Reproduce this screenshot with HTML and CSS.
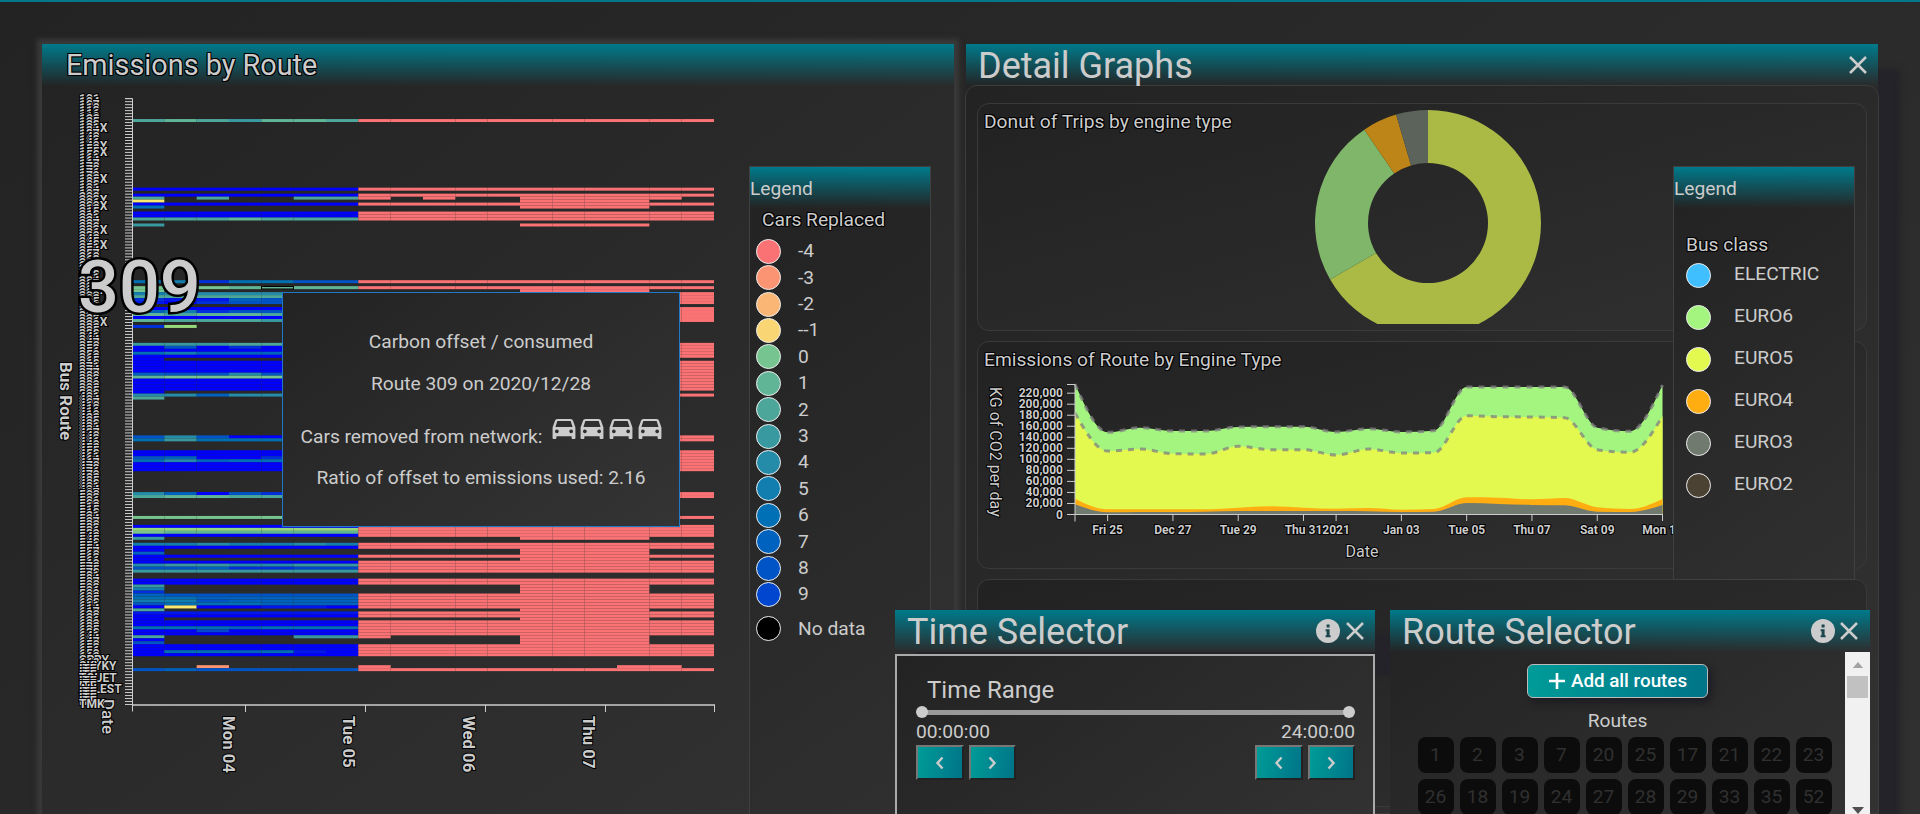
FILE: index.html
```html
<!DOCTYPE html>
<html lang="en">
<head>
<meta charset="utf-8">
<title>Emissions dashboard</title>
<link rel="stylesheet" href="styles.css">
</head>
<body>
<div class="topbar"></div>

<section class="window emissions">
  <header class="window-head"><h2 class="title outlined">Emissions by Route</h2></header>
  <svg class="heatmap" id="heatmap" width="700" height="730" viewBox="42 84 700 730"></svg>
  <aside class="legend cars">
    <header class="legend-head">Legend</header>
    <h3 class="legend-title outlined">Cars Replaced</h3>
    <ul class="legend-list" id="carsLegend"></ul>
  </aside>
  <div class="tooltip">
    <p>Carbon offset / consumed</p>
    <p>Route 309 on 2020/12/28</p>
    <p>Cars removed from network: <span class="car-icons" id="carIcons"></span></p>
    <p>Ratio of offset to emissions used: 2.16</p>
  </div>
</section>

<section class="window details">
  <header class="window-head">
    <h2 class="title large">Detail Graphs</h2>
    <svg class="close" width="18" height="18" viewBox="0 0 18 18"><path d="M1 1L17 17M17 1L1 17"/></svg>
  </header>
  <div class="details-body">
    <article class="card">
      <h3 class="card-title outlined">Donut of Trips by engine type</h3>
      <svg class="card-chart" id="donut" width="888" height="220" viewBox="978 104 888 220"></svg>
    </article>
    <article class="card">
      <h3 class="card-title outlined">Emissions of Route by Engine Type</h3>
      <svg class="card-chart" id="area" width="888" height="226" viewBox="978 342 888 226"></svg>
    </article>
    <article class="card"></article>
  </div>
  <aside class="legend bus">
    <header class="legend-head">Legend</header>
    <h3 class="legend-title outlined">Bus class</h3>
    <ul class="legend-list" id="busLegend"></ul>
  </aside>
</section>

<section class="window time">
  <header class="window-head">
    <h2 class="title large">Time Selector</h2>
    <svg class="info" width="24" height="24" viewBox="0 0 24 24"><circle cx="12" cy="12" r="12"/><path d="M10.6 5.5h3v3h-3zM9.6 10.3h4v6h1v2h-5v-2h1v-4h-1z"/></svg>
    <svg class="close" width="18" height="18" viewBox="0 0 18 18"><path d="M1 1L17 17M17 1L1 17"/></svg>
  </header>
  <div class="time-body">
    <h3 class="range-title">Time Range</h3>
    <div class="slider"><i class="thumb"></i><i class="track"></i><i class="thumb"></i></div>
    <div class="split"><span>00:00:00</span><span>24:00:00</span></div>
    <div class="split">
      <div class="steps">
        <button class="step"><svg width="10" height="16" viewBox="0 0 10 16"><path d="M7.5 2.5L2.5 8L7.5 13.5"/></svg></button>
        <button class="step"><svg width="10" height="16" viewBox="0 0 10 16"><path d="M2.5 2.5L7.5 8L2.5 13.5"/></svg></button>
      </div>
      <div class="steps">
        <button class="step"><svg width="10" height="16" viewBox="0 0 10 16"><path d="M7.5 2.5L2.5 8L7.5 13.5"/></svg></button>
        <button class="step"><svg width="10" height="16" viewBox="0 0 10 16"><path d="M2.5 2.5L7.5 8L2.5 13.5"/></svg></button>
      </div>
    </div>
  </div>
</section>

<section class="window routes">
  <header class="window-head">
    <h2 class="title large">Route Selector</h2>
    <svg class="info" width="24" height="24" viewBox="0 0 24 24"><circle cx="12" cy="12" r="12"/><path d="M10.6 5.5h3v3h-3zM9.6 10.3h4v6h1v2h-5v-2h1v-4h-1z"/></svg>
    <svg class="close" width="18" height="18" viewBox="0 0 18 18"><path d="M1 1L17 17M17 1L1 17"/></svg>
  </header>
  <div class="routes-body">
    <div class="routes-content">
      <button class="add"><svg width="18" height="18" viewBox="0 0 18 18"><path d="M9 1V17M1 9H17"/></svg>Add all routes</button>
      <h3 class="routes-title">Routes</h3>
      <div class="route-grid" id="routeGrid"></div>
    </div>
    <div class="scrollbar">
      <svg width="12" height="7" viewBox="0 0 12 7"><path d="M6 0L12 7H0z" fill="#a3a3a3"/></svg>
      <i class="scroll-thumb"></i>
      <svg class="down" width="12" height="7" viewBox="0 0 12 7"><path d="M0 0H12L6 7z" fill="#505050"/></svg>
    </div>
  </div>
</section>
<script src="main.js"></script>
</body>
</html>
```
FILE: styles.css
```css
* { box-sizing: border-box; }
html, body { height: 100%; }
body {
  margin: 0;
  overflow: hidden;
  position: relative;
  background: linear-gradient(145deg, #232323, #303030);
  color: #ccc;
  font-family: Roboto, "Liberation Sans", sans-serif;
  font-size: 19.2px;
}
h2, h3, p, ul { margin: 0; padding: 0; font-weight: 400; }
button { font-family: inherit; color: inherit; padding: 0; }
.topbar { height: 2px; background: #04788a; }
.outlined { text-shadow: -1px -1px 0 #000, 1px -1px 0 #000, -1px 1px 0 #000, 1px 1px 0 #000; }

.window { position: absolute; background: linear-gradient(145deg, #232323, #323232); }
.window-head {
  height: 42px;
  display: flex;
  align-items: center;
  background: linear-gradient(#007a8b, rgba(0, 122, 139, 0));
}
.title { font-size: 28.8px; line-height: 42px; flex: 1; }
.large { font-size: 36px; padding: 2px 0 0 12px; }
.close { fill: none; stroke: #ccc; stroke-width: 2.5; }
.info { margin-right: 6px; fill: #ccc; }
.info path { fill: #1b464c; }

.emissions { left: 42px; top: 44px; width: 912px; height: 770px; box-shadow: 0 0 5px 5px #3a3a3a; }
.emissions .title { padding-left: 24px; }
.heatmap { display: block; position: absolute; left: 0; top: 40px; }
.heatmap text, .card-chart text {
  fill: #ccc; stroke: #000; stroke-width: 2px; paint-order: stroke; font-weight: 700;
}
.heatmap .hover-label { stroke-width: 5px; font-weight: 500; }
.axis { stroke: #ccc; fill: none; }

.legend {
  position: absolute;
  top: 122px;
  width: 182px;
  border: 1px solid #404040;
  background: linear-gradient(145deg, #222, #303030);
}
.legend-head { height: 41px; line-height: 43px; background: linear-gradient(#007a8b, rgba(0, 122, 139, 0)); }
.legend-title { font-size: 19.2px; line-height: 24px; padding-left: 12px; }
.legend-list { list-style: none; }
.legend-list li { display: flex; align-items: center; }
.dot { width: 25px; height: 25px; flex: none; border-radius: 50%; border: 1px solid #eee; }
.cars { left: 707px; height: 660px; }
.cars .legend-list { padding: 6px 0 0 5.5px; }
.cars li { height: 26.42px; gap: 17.5px; }
.cars li:last-child { margin-top: 8px; }
.cars li span { margin-top: -1px; }
.bus { left: 707px; height: 414px; z-index: 2; }
.bus .legend-title { padding-top: 25px; }
.bus .legend-list { padding: 0 0 0 11.5px; margin-top: -3px; }
.bus li { height: 42px; gap: 23.5px; }
.bus li span { margin-top: -3px; }

.tooltip {
  position: absolute;
  left: 240px;
  top: 248px;
  width: 398px;
  height: 235px;
  border: 1px solid #1f78c8;
  background: linear-gradient(145deg, #232323, #343434);
  text-align: center;
  line-height: 22px;
  padding-top: 38px;
}
.tooltip p { height: 22px; margin-bottom: 20px; white-space: nowrap; }
.tooltip p:nth-child(3) { margin: 24px 0 26px; }
.car-icons svg { margin-left: 4.6px; fill: #ccc; vertical-align: 4px; }

.details { left: 966px; top: 44px; width: 912px; height: 770px; box-shadow: 22px 25px 6px #242329; }
.details .close { margin-right: 11px; }
.details-body {
  margin: -1px -1px 0;
  height: 729px;
  border: 1px solid #3c3c3c;
  border-radius: 12px 12px 0 0;
  background: linear-gradient(145deg, #232323, #323232);
  padding: 17px 11px;
  display: flex;
  flex-direction: column;
  gap: 10px;
}
.card {
  height: 228px;
  flex: none;
  border: 1px solid #3a3a3a;
  border-radius: 12px;
  background: linear-gradient(165deg, #222, #303030);
  position: relative;
}
.card-title { font-size: 19.2px; line-height: 24px; padding: 6px 0 0 6px; }
.card-chart { position: absolute; left: 0; top: 0; }

.time { left: 895px; top: 610px; width: 480px; height: 204px; z-index: 3; background: none; }
.time .window-head { background: linear-gradient(#007a8b, #2a2c2d); box-shadow: 22px 24px 4px #242329; }
.time .close { margin-right: 11px; }
.time-body {
  height: 170px;
  margin-top: 2px;
  border: 2px solid #aaa;
  background: linear-gradient(145deg, #232323, #323232);
  padding: 18px 18px 0 19px;
  position: relative;
}
.range-title { font-size: 24px; line-height: 32px; padding-left: 11px; }
.slider { display: flex; align-items: center; height: 12px; }
.thumb { width: 12px; height: 12px; border-radius: 50%; background: #ccc; z-index: 1; }
.track { flex: 1; height: 5px; margin: 0 -6px; background: #999; }
.split { display: flex; justify-content: space-between; line-height: 27px; }
.steps { display: flex; gap: 5px; }
.step {
  width: 47.5px;
  height: 35px;
  border: 2px solid;
  border-color: #777 #222 #222 #777;
  background: linear-gradient(100deg, #009c98, #007488);
}
.step svg { display: block; margin: auto; fill: none; stroke: #ccc; stroke-width: 2.4; }

.routes { left: 1390px; top: 610px; width: 480px; height: 204px; z-index: 3; }
.routes .close { margin-right: 12px; }
.routes .info { margin-right: 5px; }
.routes-body { display: flex; height: 162px; }
.routes-content { flex: 1; display: flex; flex-direction: column; align-items: center; padding-top: 12px; }
.add {
  width: 181px;
  height: 34px;
  flex: none;
  display: flex;
  align-items: center;
  justify-content: center;
  gap: 5px;
  border: 1px solid #bbb;
  border-radius: 6px;
  color: #fff;
  font-size: 18.8px;
  font-weight: 500;
  background: linear-gradient(100deg, #009c98, #007488);
  box-shadow: 3px 4px 8px #1a1a22;
}
.add svg { fill: none; stroke: #fff; stroke-width: 2.6; }
.routes-title { font-size: 19.2px; line-height: 24px; margin: 11px 0 4px; }
.route-grid { display: grid; grid-template-columns: repeat(10, 36px); gap: 6px; margin-left: 14px; }
.route {
  height: 36px;
  border-radius: 8px;
  background: #0c0c0c;
  color: #303030;
  text-align: center;
  line-height: 36px;
}
.scrollbar {
  width: 25px;
  background: #f1f1f1;
  display: flex;
  flex-direction: column;
  align-items: center;
  padding-top: 10px;
}
.scroll-thumb { width: 21px; height: 25px; margin-top: 8px; background: #c1c1c1; }
.scrollbar .down { margin-top: 109px; flex: none; }
```
FILE: main.js
```js
const NS = 'http://www.w3.org/2000/svg';
function add(parent, name, attrs, text) {
  const el = document.createElementNS(NS, name);
  for (const k in attrs) el.setAttribute(k, attrs[k]);
  if (text !== undefined) el.textContent = text;
  parent.appendChild(el);
  return el;
}

/* Cars replaced scale */
const scale = ['#fa7274', '#fa9473', '#fab674', '#f9d574', '#76c48f', '#60b596', '#4ca69a', '#3899a0',
  '#248ba8', '#127eb0', '#0070b6', '#0062bf', '#0054c6', '#0046ce'];
const names = ['-4', '-3', '-2', '--1', '0', '1', '2', '3', '4', '5', '6', '7', '8', '9'];
function legendItem(list, color, label) {
  const li = document.createElement('li');
  li.innerHTML = `<i class="dot" style="background:${color}"></i><span>${label}</span>`;
  list.appendChild(li);
}
const cars = document.getElementById('carsLegend');
names.forEach((n, i) => legendItem(cars, scale[i], n));
legendItem(cars, '#000', 'No data');
const bus = document.getElementById('busLegend');
[['#3fbfff', 'ELECTRIC'], ['#a3f580', 'EURO6'], ['#e3f94f', 'EURO5'], ['#ffad11', 'EURO4'],
  ['#707a6f', 'EURO3'], ['#4b4233', 'EURO2']].forEach(d => legendItem(bus, d[0], d[1]));

/* Heatmap: one string per route, one character per time slot */
const color = { r: scale[0], o: scale[1], y: '#f9e86e', g: '#96d87c', a: '#0030dd', b: '#0018ee', B: '#0000ff' };
for (let i = 0; i < 10; i++) color[i] = scale[i + 4];
const F = 'rrrrrrrrrrr', M = '.....rrrr..', N = '...........';
const rows = [
  [119, '2123112', F], [188, 'BBBBBBB', F], [194, 'BBBBBBB', F], [197, '2.2..22', 'r.r..rrrrr.'], [200, 'y......', M],
  [203, 'BBBBBBB', F], [206, '6......', M], [212, 'BBBBBBB', F], [215, 'BBBBBBB', F], [218, '2221222', F], [224, '3......', M],
  [280, '65a6688', F], [286, '0001111', F], [289, '0......', M], [292, '5444444', F], [295, '2222222', F], [298, 'abb7877', F],
  [301, 'bBa8888', F], [307, 'BBBBBBB', F], [310, '75a8888', F], [313, '1211222', F], [316, 'BBBBBBB', F], [319, '1222322', F],
  [325, 'ag.....', N], [343, '3332222', F], [346, 'B8BaBBB', F], [349, 'BBBBBBB', F], [352, '6577777', F], [355, 'BBBBBBB', F],
  [358, 'B......', N], [361, 'BBBBBBB', F], [364, 'BBBBBBB', F], [367, 'BBBBBBB', F], [370, 'BBBBBBB', F], [373, '7884888', F],
  [376, '1000000', F], [379, 'BBBBBBB', F], [382, 'BBBBBBB', F], [385, 'BBBBBBB', F], [388, 'BBBBBBB', F], [391, 'B......', N],
  [394, '4474444', F], [397, '2......', N], [435, '848BBBB', F], [438, '6366666', F], [450, 'BBBBBBB', F], [453, 'BBBBBBB', F],
  [456, '87BBaaa', F], [459, '6476666', F], [462, 'BBBBBBB', F], [465, 'BBBBBBB', F], [468, 'BBBBBBB', F], [492, '47B8aaa', F],
  [495, '2112222', F], [516, '0000000', F], [525, 'BBBBBBB', F], [528, 'ggggggg', F], [531, '0111111', F], [534, 'BBBBBBB', F],
  [537, '3......', M], [543, '5545545', F], [546, 'BBBBBBB', F], [549, 'B......', M], [552, '7......', M], [555, 'BBBBBBB', F],
  [558, 'B......', M], [561, 'BBBBBBB', F], [564, '4334433', F], [567, '887aa99', F], [570, '3333333', F], [579, 'BBBBBBB', F],
  [582, 'BBBBBBB', F], [585, '3......', M], [588, '5......', M], [591, 'a......', M], [594, '7888888', F], [597, '6677777', F],
  [600, '5587777', F], [603, '8666777', F], [606, 'ByBBbbB', F], [609, '2......', M], [612, 'bbbbbbb', F], [615, 'BBBBBBB', F],
  [618, 'B......', M], [621, 'BBBBBBB', F], [624, 'BBBBBBB', F], [627, '6667666', F], [630, 'BB9BBBB', F], [633, 'BBBBBBB', F],
  [636, '2....33', 'r....rrrr..'], [639, 'B......', M], [642, '8......', M], [645, 'BBBBBBB', F], [648, 'BBBBBBB', F],
  [651, 'B6676bB', F], [654, 'BBBBBBB', F], [665, '..o....', 'r.......rr.'], [668, '8788888', F]
];
const heat = document.getElementById('heatmap');
const pitch = 2.9842, slot = 97 / 3;
rows.forEach(([y, left, right]) => {
  const top = 316 + Math.round((y - 316) / pitch) * pitch;
  [...(left + right)].forEach((c, i) => {
    if (c !== '.') add(heat, 'rect', { x: 132 + i * slot, y: top, width: slot, height: pitch, fill: color[c] });
  });
});
add(heat, 'rect', { x: 261.5, y: 286.5, width: 32, height: 2.5, fill: 'none', stroke: '#000' });

/* Route axis */
let d = 'M125 98.5H132.5V711.5M132.5 704.5';
for (let i = 0; i < 204; i++) d += `M125 ${(98.7 + i * pitch).toFixed(2)}H132`;
add(heat, 'path', { d, class: 'axis' });
add(heat, 'path', { d: 'M132.5 705H715', class: 'axis', 'stroke-width': 2, 'stroke-opacity': 0.75 });
add(heat, 'path', { d: 'M245.5 705V712M365.5 705V712M485.5 705V712M605.5 705V712M714.5 705V712', class: 'axis' });

function down(svg, x, y, size, text, weight) {
  add(svg, 'text', { transform: `translate(${x} ${y}) rotate(90)`, 'font-size': size, style: `font-weight:${weight}` }, text);
}
down(heat, 102, 699, 17, 'Date', 500);
const special = { 10: '10X', 16: '14X', 18: '15X', 27: '19X', 34: '21X', 36: '22X', 44: '25X', 49: '28X', 64: '31X', 75: '36X' };
const tail = { 188: 'SPRY', 190: 'SKYKY', 194: 'TOUET', 198: 'ALLEST', 203: 'TMK' };
for (let i = 0; i < 204; i++) {
  const n = 101 + i * 3;
  let label = String(n);
  if (special[i]) label = n + 'X';
  if (i > 190) label = 'ITE';
  if (tail[i]) label = tail[i];
  add(heat, 'text', { x: 79, y: 102.6 + i * pitch, 'font-size': 12 }, label);
}
add(heat, 'text', { x: 78, y: 311.5, 'font-size': 72, class: 'hover-label' }, '309');
down(heat, 60, 362, 17, 'Bus Route', 700);
[['Mon 04', 223], ['Tue 05', 343], ['Wed 06', 463], ['Thu 07', 583]].forEach(t => down(heat, t[1], 716, 16.8, t[0], 700));

/* Cars in tooltip */
document.getElementById('carIcons').innerHTML =
  ('<svg width="24" height="20" viewBox="0 0 24 21"><path fill-rule="evenodd" d="M5 0h14q1.800 0 2.400 1.700L24 9v11q0 1-1 1h-2q-1 0-1-1v-2H4v2q0 1-1 1H1q-1 0-1-1V9l2.600-7.300Q3.200 0 5 0zM5 2L3 8.300h18L19 2zM4.500 11a2 2 0 1 0 .01 0zM19.500 11a2 2 0 1 0 .01 0z"/></svg>').repeat(4);

/* Donut */
const donut = document.getElementById('donut');
const pt = (r, a) => { const t = a * Math.PI / 180; return (1428 + r * Math.sin(t)).toFixed(2) + ' ' + (223 - r * Math.cos(t)).toFixed(2); };
[[0, 240, '#aaba45'], [240, 325.7, '#80b66a'], [325.7, 343.6, '#bd8417'], [343.6, 360, '#5c635a']].forEach(([a, b, c]) => {
  const big = b - a > 180 ? 1 : 0;
  add(donut, 'path', { d: `M${pt(113, a)}A113 113 0 ${big} 1 ${pt(113, b)}L${pt(60, b)}A60 60 0 ${big} 0 ${pt(60, a)}Z`, fill: c });
});

/* Stacked area */
const area = document.getElementById('area');
const step = 32.64;
function slopes(v) {
  const s = v.slice(1).map((y, i) => (y - v[i]) / step);
  const m = v.map((_, i) => i === 0 || i === v.length - 1 ? 0 :
    (Math.sign(s[i - 1]) + Math.sign(s[i])) * Math.min(Math.abs(s[i - 1]), Math.abs(s[i]), 0.25 * Math.abs(s[i - 1] + s[i])));
  m[0] = (3 * s[0] - m[1]) / 2;
  m[v.length - 1] = (3 * s[s.length - 1] - m[v.length - 2]) / 2;
  return m;
}
function line(v) {
  const m = slopes(v), k = step / 3;
  let p = `M1075 ${v[0]}`;
  for (let i = 1; i < v.length; i++) {
    const x0 = 1075 + (i - 1) * step, x1 = x0 + step;
    p += `C${x0 + k} ${v[i - 1] + m[i - 1] * k} ${x1 - k} ${v[i] - m[i] * k} ${x1} ${v[i]}`;
  }
  return p;
}
const green = [384, 432.3, 427.7, 431, 431, 427, 426.7, 426.7, 432, 428.7, 432, 430.7, 387, 387, 387, 387, 427.7, 431.3, 385];
const yellow = [413, 451, 449, 453.7, 454, 446.3, 449.7, 449.7, 455, 449, 453, 452.7, 415.7, 416.7, 417, 417.7, 449.7, 452.3, 416];
const orange = [498.7, 509.3, 509.3, 509.3, 509.3, 507.7, 506.3, 507.7, 508.7, 508, 509.7, 509, 497.3, 497.7, 499.3, 498, 507.3, 509, 499];
const grey = [504.3, 512.3, 512, 512, 511.7, 511, 511, 511, 511, 511.3, 512, 511.7, 503, 504, 505, 505.3, 511.7, 512, 505];
[[green, '#a3f580'], [yellow, '#e3f94f'], [orange, '#ffad11'], [grey, '#707a6f']].forEach(([v, c]) =>
  add(area, 'path', { d: line(v) + `V514.500H1075Z`, fill: c }));
[green, yellow].forEach(v => add(area, 'path', { d: line(v), fill: 'none', stroke: '#808080', 'stroke-opacity': 0.75, 'stroke-width': 3, 'stroke-dasharray': '6 6' }));
let ax = 'M1067 384.5H1075V521.500M1075 514.500H1662.500V521';
for (let i = 0; i < 12; i++) {
  const y = 514.5 - i * 11.03;
  ax += `M1067 ${y}H1075`;
  add(area, 'text', { x: 1063, y: y + 4, 'font-size': 12, 'text-anchor': 'end' }, (i * 20000).toLocaleString('en-US'));
}
[['Fri 25', 1], ['Dec 27', 3], ['Tue 29', 5], ['Thu 31', 7], ['2021', 8], ['Jan 03', 10], ['Tue 05', 12], ['Thu 07', 14], ['Sat 09', 16], ['Mon 11', 18]].forEach(([t, i]) => {
  const x = 1075 + i * step;
  ax += `M${x} 514V521`;
  add(area, 'text', { x, y: 533.5, 'font-size': 12, 'text-anchor': 'middle' }, t);
});
add(area, 'path', { d: ax, class: 'axis' });
add(area, 'text', { x: 1362, y: 557, 'font-size': 16, 'text-anchor': 'middle', style: 'font-weight:400' }, 'Date');
down(area, 989.5, 387, 16, 'KG of CO2 per day', 400);

/* Routes */
document.getElementById('routeGrid').innerHTML =
  [1, 2, 3, 7, 20, 25, 17, 21, 22, 23, 26, 18, 19, 24, 27, 28, 29, 33, 35, 52].map(n => `<div class="route">${n}</div>`).join('');
```
